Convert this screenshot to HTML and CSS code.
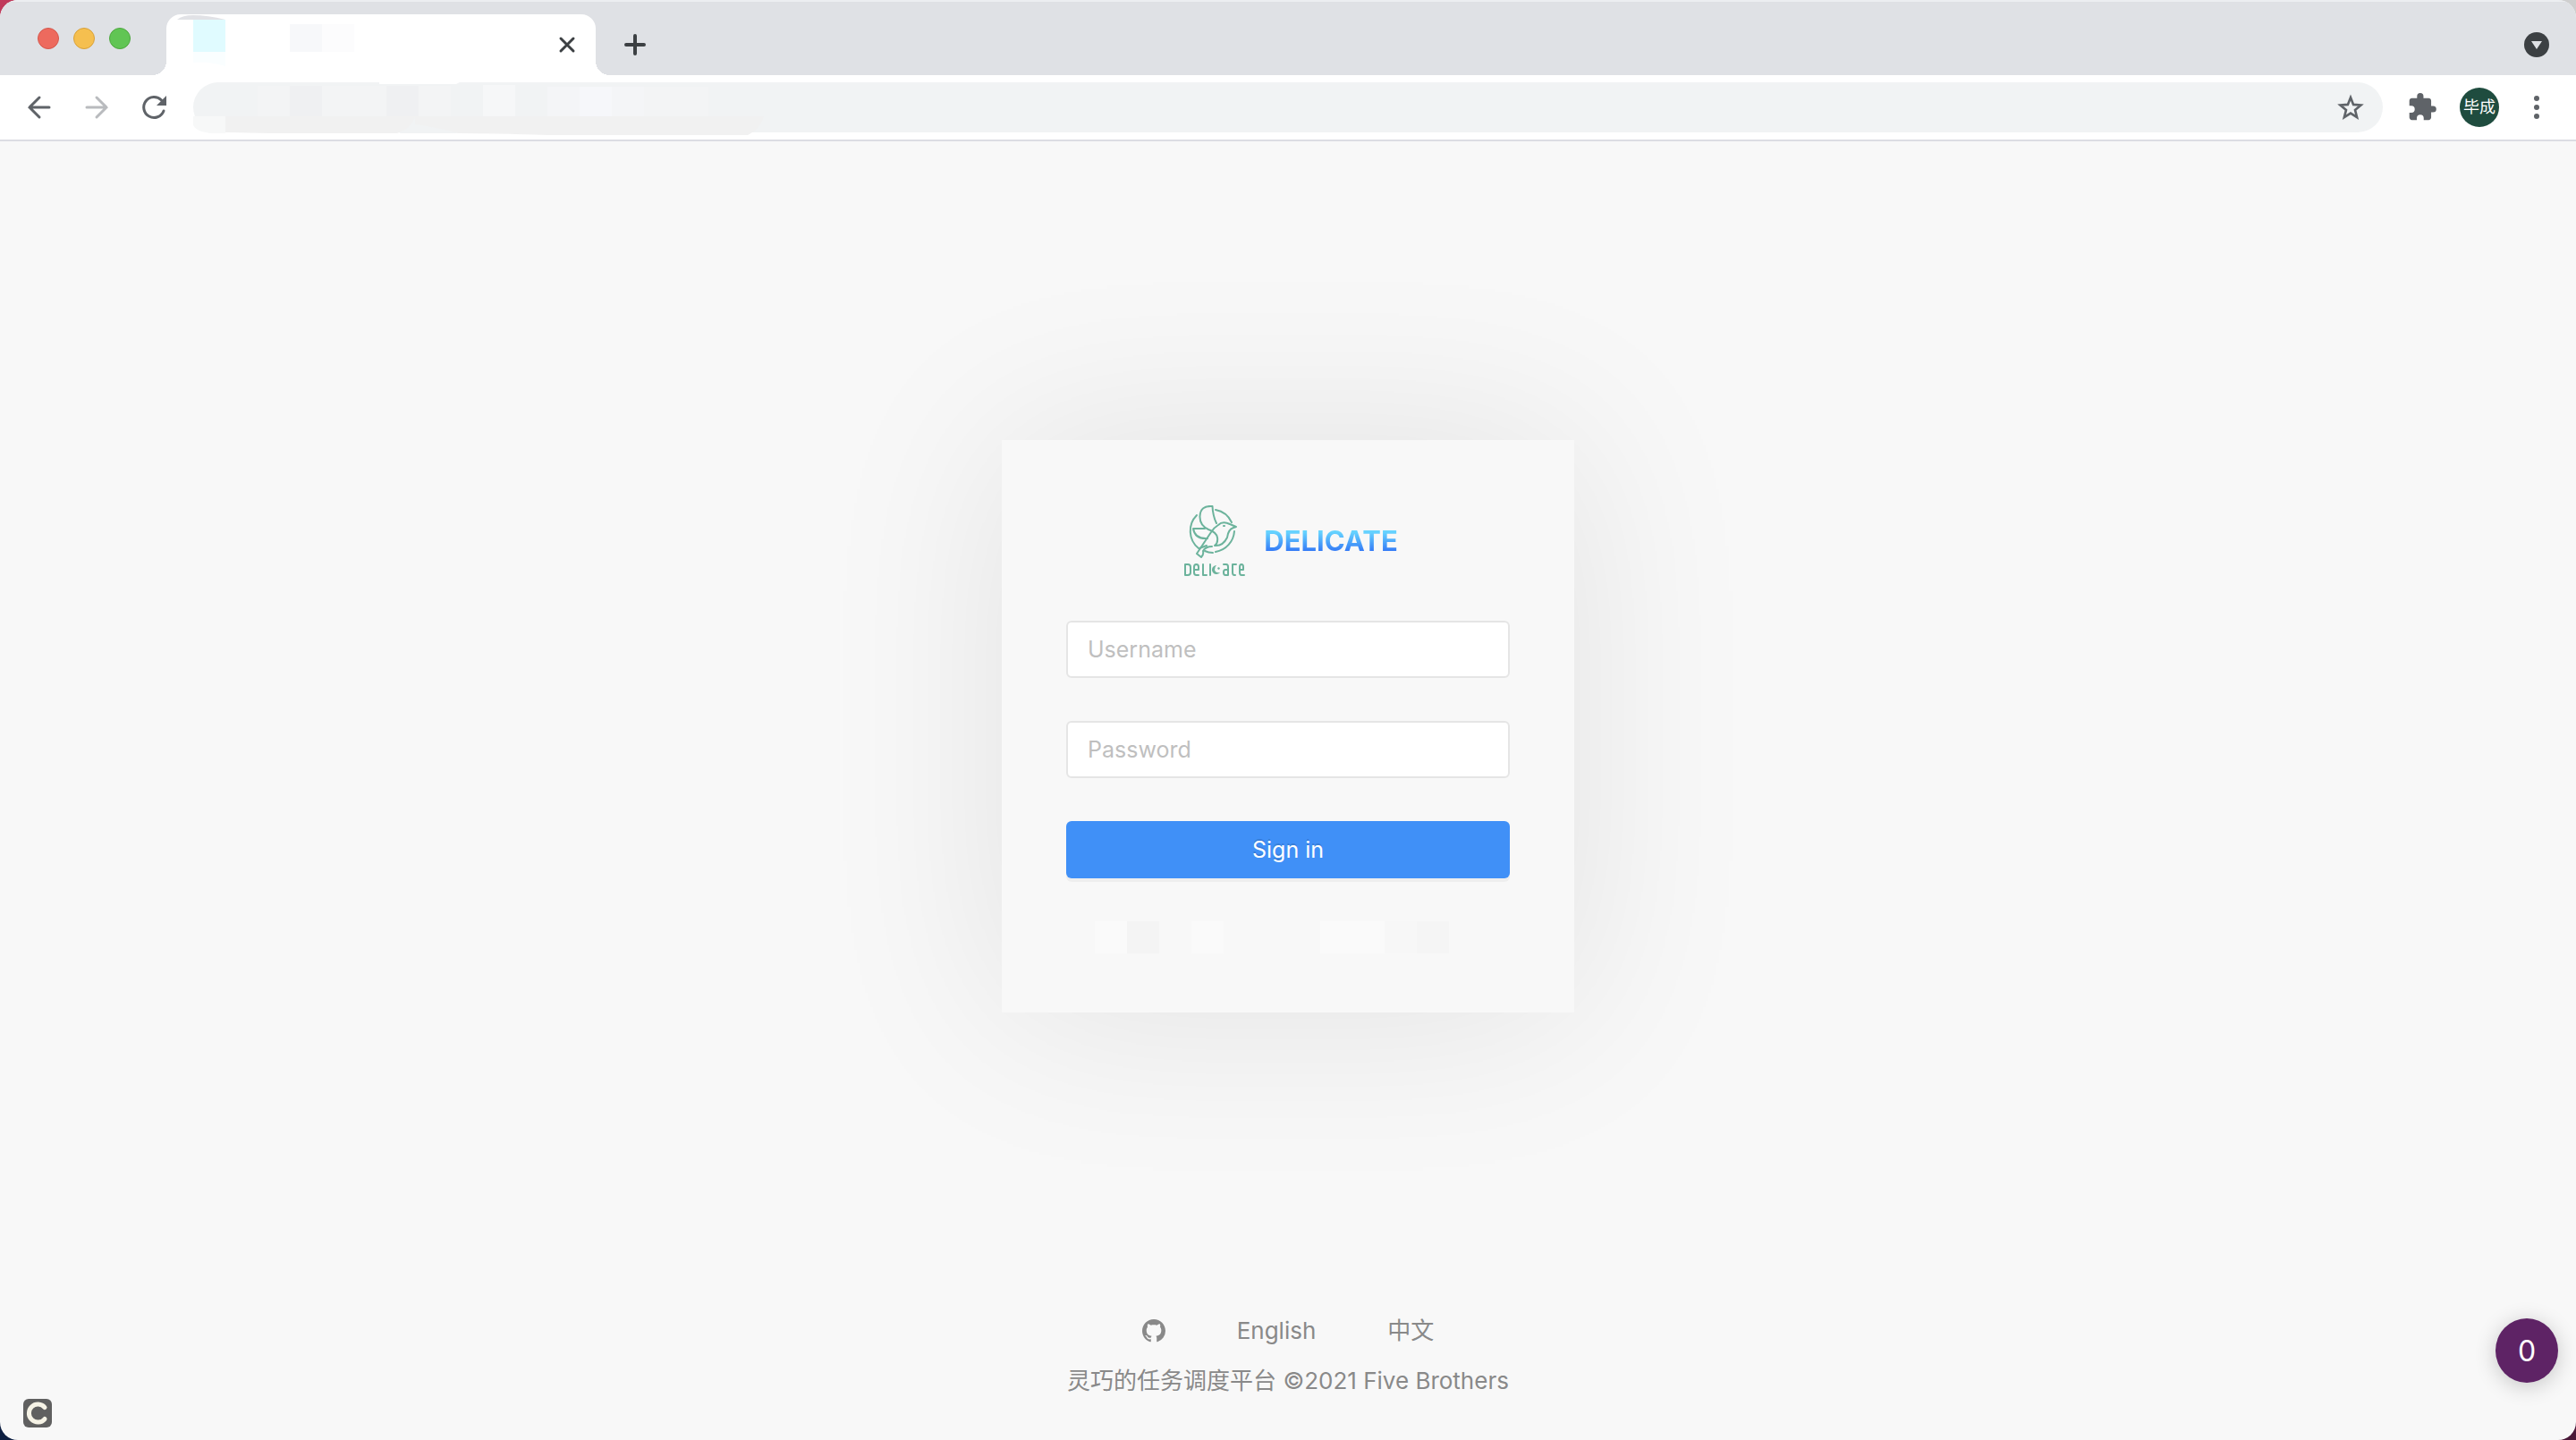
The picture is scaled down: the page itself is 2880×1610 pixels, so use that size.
FILE: index.html
```
<!DOCTYPE html>
<html lang="en">
<head>
    <meta charset="UTF-8">
    <meta name="viewport" content="width=device-width, initial-scale=1.0">
    <title>Delicate</title>
    <link rel="stylesheet" href="styles.css">
</head>
<body>
    <div class="window">
        <div class="tab-strip">
            <div class="lights">
                <span class="light red"></span>
                <span class="light yellow"></span>
                <span class="light green"></span>
            </div>
            <div class="tab">
                <svg class="tab-blocks" viewBox="0 0 220 68" aria-hidden="true">
                    <path d="M12 6 Q18 1 30 1 Q46 1 66 6z" fill="#e1e2e6"/>
                    <path d="M30 6h36v36h-36z" fill="#e0fbff"/>
                    <path d="M30 42h36v16q-20-6-36-4z" fill="#fafeff"/>
                    <path d="M138 11h36v31h-36z" fill="#f7f8fa"/>
                    <path d="M174 11h36v31h-36z" fill="#fcfcfd"/>
                </svg>
                <button class="icon-btn" aria-label="Close tab">
                    <svg width="40" height="40" viewBox="0 0 40 40"><path d="M13 13l14 14M27 13L13 27" stroke="#3c4043" stroke-width="3" stroke-linecap="round"/></svg>
                </button>
            </div>
            <button class="icon-btn new-tab" aria-label="New tab">
                <svg width="40" height="40" viewBox="0 0 40 40"><path d="M20 10v20M10 20h20" stroke="#3c4043" stroke-width="4" stroke-linecap="round"/></svg>
            </button>
            <button class="icon-btn tab-search" aria-label="Search tabs">
                <svg width="40" height="40" viewBox="0 0 40 40"><circle cx="20" cy="20" r="14" fill="#3c4043"/><path d="M14 16h12l-6 9z" fill="#dfe1e5"/></svg>
            </button>
        </div>

        <div class="toolbar">
            <button class="icon-btn" aria-label="Back">
                <svg width="40" height="40" viewBox="0 0 40 40"><path d="M31 20H9M20 9L9 20l11 11" fill="none" stroke="#5f6368" stroke-width="3" stroke-linecap="round"/></svg>
            </button>
            <button class="icon-btn" aria-label="Forward">
                <svg width="40" height="40" viewBox="0 0 40 40"><path d="M9 20h22M20 9l11 11-11 11" fill="none" stroke="#b9bbbe" stroke-width="3" stroke-linecap="round"/></svg>
            </button>
            <button class="icon-btn" aria-label="Reload">
                <svg width="40" height="40" viewBox="0 0 40 40"><path d="M31 24A11.500 11.500 0 1 1 28.500 12" fill="none" stroke="#5f6368" stroke-width="3" stroke-linecap="round"/><path d="M34 7v11H23z" fill="#5f6368"/></svg>
            </button>
            <div class="omnibox">
                <svg class="omnibox-blocks" viewBox="0 0 640 60" aria-hidden="true">
                    <path d="M0 38h36v19H22Q4 56 0 48z" fill="#f7f8f8"/>
                    <path d="M36 38h212q-4 14-20 19H86l-50-1z" fill="#f1f1f1"/>
                    <path d="M230 57l18-10 50 10z" fill="#f1f3f4"/>
                    <path d="M248 38h390q-4 15-18 21H396q-60-2-100-2-20-6-48-10z" fill="#f1f1f1"/>
                    <path d="M72 4h36v34H72zM144 4h72v34h-72zM252 4h36v34h-36zM504 5h72v33h-72z" fill="#f3f4f5"/>
                    <path d="M108 4h36v34h-36zM216 4h36v34h-36z" fill="#eff0f2"/>
                    <path d="M324 3h36v35h-36z" fill="#f6f7f8"/>
                    <path d="M396 5h36v33h-36zM468 5h36v33h-36z" fill="#f4f5f7"/>
                    <path d="M432 5h36v33h-36z" fill="#f6f7fa"/>
                    <path d="M208 0h90l-4 2h-86z" fill="#fff"/>
                </svg>
                <input class="address" type="text" aria-label="Address">
                <button class="icon-btn star" aria-label="Bookmark this page">
                    <svg width="40" height="40" viewBox="0 0 40 40"><path d="M20 9l3.100 7.900 8.400.600-6.500 5.400 2.100 8.300-7.100-4.600-7.100 4.600 2.100-8.300-6.500-5.400 8.400-.600z" fill="none" stroke="#5f6368" stroke-width="2.600"/></svg>
                </button>
            </div>
            <button class="icon-btn" aria-label="Extensions">
                <svg width="40" height="40" viewBox="0 0 24 24"><path transform="translate(1.700 1.600) scale(.86)" d="M20.500 11H19V7c0-1.100-.9-2-2-2h-4V3.500a2.500 2.500 0 0 0-5 0V5H4c-1.100 0-2 .9-2 2v3.800h1.500a2.700 2.700 0 0 1 0 5.400H2V20c0 1.100.9 2 2 2h3.800v-1.500a2.700 2.700 0 0 1 5.400 0V22H17c1.100 0 2-.9 2-2v-4h1.500a2.500 2.500 0 0 0 0-5z" fill="#5f6368"/></svg>
            </button>
            <button class="avatar" lang="zh">毕成</button>
            <button class="icon-btn" aria-label="Menu">
                <svg width="40" height="40" viewBox="0 0 40 40" fill="#5f6368"><circle cx="20" cy="10" r="3"/><circle cx="20" cy="20" r="3"/><circle cx="20" cy="30" r="3"/></svg>
            </button>
        </div>

        <main class="page">
            <form class="card" onsubmit="return false">
                <div class="brand">
                    <svg class="logo" width="80" height="80" viewBox="0 0 80 80" role="img" aria-label="Delicate">
                        <g fill="none" stroke="#6cb39c" stroke-width="2" stroke-linecap="round" stroke-linejoin="round">
                            <path d="M21 11A25 25 0 0 0 23 48M42 5A25 25 0 0 1 60 19M63 29A25 25 0 0 1 42 52M39 53Q34 53 30 51"/>
                            <path d="M43 20Q39 12 38.500 1Q25 0 24.500 12Q24 22 34 27Q43 30 44 36Q45 42 41 45Q50 46 55 36Q56 27 62 25L65 24L58 21Q50 17 45 22Q40 25 37 30L21 54L26 58Q29 55 28 51Q31 46 38 46"/>
                            <path d="M30 26H17Q19 38 33 37M24 48L32 45"/>
                            <path d="M51 23h1"/>
                            <path d="M8 66v12h3q3 0 3-3v-6q0-3-3-3zM18 72h5v-3q0-3-2.500-3t-2.500 3v6q0 3 2.500 3H23M28 66v12h4M36 66v12M51 66h3q2 0 2 3v9h-3q-2 0-2-3t2-3h3M65 66h-4v9q0 3 2 3h1M69 72h4v-3q0-3-2-3t-2 3v6q0 3 2 3h3"/>
                        </g>
                        <path d="M43 67a5 5 0 1 0 4 8q-5 1-6-3 0-3 2-5zM44 70l2-1 1 2-2 1z" fill="#6cb39c"/>
                    </svg>
                    <h1 class="title">DELICATE</h1>
                </div>
                <input class="field" type="text" placeholder="Username" aria-label="Username">
                <input class="field" type="password" placeholder="Password" aria-label="Password">
                <button class="submit" type="submit">Sign in</button>
                <div class="hint" aria-hidden="true">
                    <span class="block light-block"></span>
                    <span class="block dark-block"></span>
                    <span class="block"></span>
                    <span class="block light-block"></span>
                    <span class="block"></span>
                    <span class="block"></span>
                    <span class="block"></span>
                    <span class="block light-block"></span>
                    <span class="block light-block"></span>
                    <span class="block soft-block"></span>
                    <span class="block mid-block"></span>
                    <span class="block"></span>
                </div>
            </form>
        </main>

        <footer class="footer">
            <nav class="links">
                <a href="#" aria-label="GitHub">
                    <svg class="github" width="26" height="26" viewBox="0 0 16 16" fill="#898989"><path d="M8 0C3.580 0 0 3.580 0 8c0 3.540 2.290 6.530 5.470 7.590.4.070.55-.17.55-.38 0-.19-.01-.82-.01-1.490-2.010.37-2.530-.49-2.690-.94-.09-.23-.48-.94-.82-1.130-.28-.15-.68-.52-.01-.53.63-.01 1.080.58 1.230.82.72 1.210 1.870.87 2.330.66.07-.52.28-.87.51-1.070-1.780-.2-3.640-.89-3.640-3.950 0-.87.31-1.590.82-2.150-.08-.2-.36-1.020.08-2.120 0 0 .67-.21 2.200.82.64-.18 1.320-.27 2-.27s1.360.09 2 .27c1.530-1.040 2.200-.82 2.200-.82.44 1.100.16 1.920.08 2.120.51.56.82 1.270.82 2.150 0 3.070-1.870 3.750-3.650 3.950.29.25.54.73.54 1.480 0 1.070-.01 1.930-.01 2.200 0 .21.15.46.55.38A8.010 8.010 0 0 0 16 8c0-4.420-3.580-8-8-8z"/></svg>
                </a>
                <a href="#">English</a>
                <a href="#" lang="zh">中文</a>
            </nav>
            <div class="copyright">灵巧的任务调度平台 ©2021 Five Brothers</div>
        </footer>

        <div class="corner-badge" aria-hidden="true">
            <svg width="32" height="32" viewBox="0 0 32 32"><path d="M24 9.500A10 10 0 1 0 24 22.500" fill="none" stroke="#f6f3e6" stroke-width="5" stroke-linecap="round"/></svg>
        </div>
        <button class="counter">0</button>
    </div>
</body>
</html>
```

FILE: styles.css
```
* {
    box-sizing: border-box;
}

body {
    margin: 0;
    background: conic-gradient(#cfcfcf 25%, #4a1838 25% 50%, #0e1f42 50% 75%, #c03a5b 75%);
    font-family: Inter, "Noto Sans CJK SC", sans-serif;
    font-size: 26px;
    color: #898989;
}

button {
    border: 0;
    padding: 0;
    background: none;
    font-family: inherit;
    cursor: pointer;
}

.window {
    position: relative;
    display: flex;
    flex-direction: column;
    min-height: 100vh;
    background: #f8f8f8;
    border-radius: 20px;
    overflow: hidden;
}

.icon-btn {
    display: block;
    width: 40px;
    height: 40px;
    flex: none;
}

.icon-btn svg {
    display: block;
}

/* tab strip */
.tab-strip {
    display: flex;
    height: 84px;
    padding: 14px 24px 0 42px;
    background: #dfe1e5;
    border-top: 2px solid #eceef1;
}

.lights {
    display: flex;
    gap: 16px;
    width: 144px;
    padding-top: 15px;
}

.light {
    width: 24px;
    height: 24px;
    border-radius: 50%;
}

.red {
    background: #ed6a5e;
    border: 1px solid #d5574c;
}

.yellow {
    background: #f5bf4f;
    border: 1px solid #d8a13a;
}

.green {
    background: #61c554;
    border: 1px solid #4ea73f;
}

.tab {
    position: relative;
    display: flex;
    align-items: center;
    justify-content: flex-end;
    width: 480px;
    height: 68px;
    padding-right: 12px;
    background: #fff;
    border-radius: 16px 16px 0 0;
}

.tab::before,
.tab::after {
    content: "";
    position: absolute;
    bottom: 0;
    width: 16px;
    height: 16px;
}

.tab::before {
    left: -16px;
    background: radial-gradient(circle at 0 0, transparent 16px, #fff 16px);
}

.tab::after {
    right: -16px;
    background: radial-gradient(circle at 100% 0, transparent 16px, #fff 16px);
}

.tab-blocks {
    position: absolute;
    left: 0;
    top: 0;
    width: 220px;
    height: 68px;
}

.new-tab {
    margin: 14px 0 0 24px;
}

.tab-search {
    margin: 14px 0 0 auto;
}

/* toolbar */
.toolbar {
    display: flex;
    align-items: center;
    gap: 24px;
    height: 74px;
    padding: 0 24px;
    background: #fff;
    border-bottom: 2px solid #dcdde3;
}

.omnibox {
    position: relative;
    display: flex;
    align-items: center;
    flex: 1;
    height: 56px;
    padding-right: 16px;
    background: #f1f3f4;
    border-radius: 28px;
}

.omnibox-blocks {
    position: absolute;
    left: 0;
    top: 0;
    width: 640px;
    height: 60px;
}

.address {
    position: relative;
    flex: 1;
    height: 56px;
    padding: 0 28px;
    border: 0;
    background: none;
    outline: none;
    font: inherit;
}

.avatar {
    width: 44px;
    height: 44px;
    margin: 0 -2px;
    border-radius: 50%;
    background: #1f4c3f;
    color: #fff;
    font-size: 18px;
    line-height: 44px;
}

/* login card */
.page {
    display: flex;
    flex: 1;
    align-items: center;
    justify-content: center;
}

.card {
    display: flex;
    flex-direction: column;
    gap: 48px;
    width: 640px;
    height: 640px;
    padding: 72px;
    background: #f8f8f8;
    box-shadow: 0 0 200px rgba(0, 0, 0, 0.09);
}

.brand {
    display: flex;
    align-items: center;
    justify-content: center;
    gap: 16px;
    height: 82px;
    flex: none;
}

.title {
    margin: 0;
    font-size: 31px;
    line-height: 40px;
    font-weight: 700;
    color: transparent;
    background: linear-gradient(#66d3ff 25%, #2e6ff5 85%);
    -webkit-background-clip: text;
    background-clip: text;
}

.field {
    height: 64px;
    padding: 0 22px;
    background: #fff;
    border: 2px solid #e5e5e5;
    border-radius: 6px;
    font-family: inherit;
    font-size: 25px;
    color: #333;
    flex: none;
}

.field::placeholder {
    color: #bfbfbf;
    opacity: 1;
}

.submit {
    height: 64px;
    flex: none;
    border-radius: 6px;
    background: #4090f7;
    color: #fff;
    font-size: 25px;
    box-shadow: 0 4px 0 rgba(0, 0, 0, 0.04);
    text-shadow: 0 -2px 0 rgba(0, 0, 0, 0.12);
}

.hint {
    display: flex;
    justify-content: center;
}

.block {
    width: 36px;
    height: 36px;
}

.light-block {
    background: #fafafa;
}

.dark-block {
    background: #f4f4f4;
}

.soft-block {
    background: #f7f7f7;
}

.mid-block {
    background: #f5f5f5;
}

/* footer */
.footer {
    display: flex;
    flex-direction: column;
    align-items: center;
    gap: 12px;
    padding-bottom: 44px;
    line-height: 44px;
}

.links {
    display: flex;
    gap: 80px;
}

.links a {
    color: inherit;
    text-decoration: none;
}

.github {
    display: block;
    margin: 9px 0;
}

.corner-badge {
    position: absolute;
    left: 26px;
    bottom: 14px;
    width: 32px;
    height: 32px;
    border-radius: 6px;
    background: #606060;
}

.corner-badge svg {
    display: block;
}

.counter {
    position: absolute;
    right: 20px;
    bottom: 64px;
    width: 70px;
    height: 72px;
    border-radius: 50%;
    background: #5e2365;
    color: #fff;
    font-size: 32px;
    box-shadow: 0 4px 24px rgba(0, 0, 0, 0.2);
}
```
